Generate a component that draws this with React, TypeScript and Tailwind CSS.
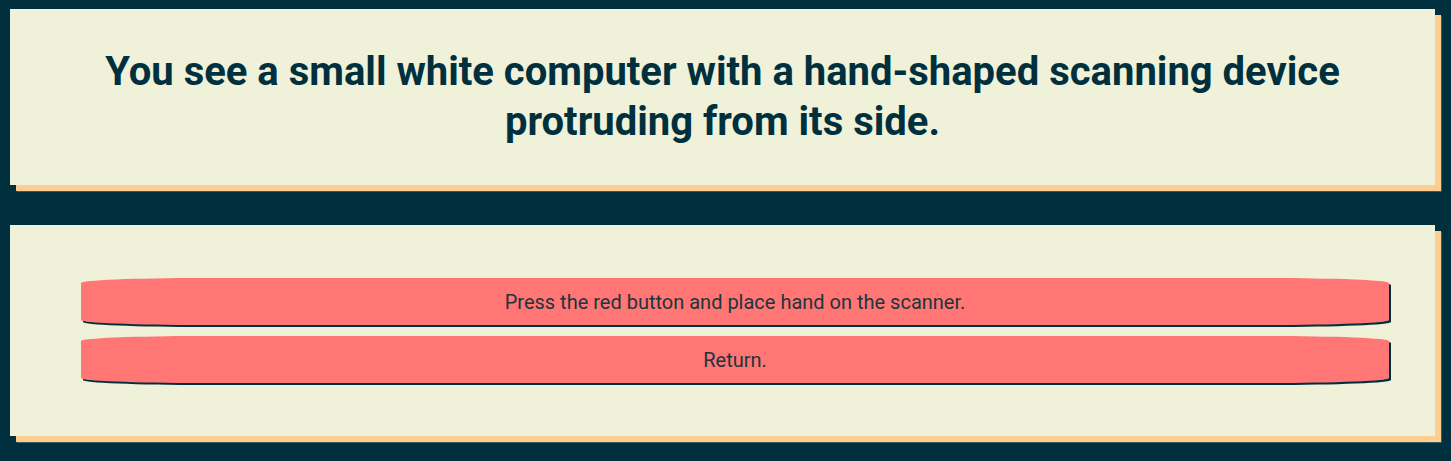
export default function App() {
  const choices = ['Press the red button and place hand on the scanner.', 'Return.']

  return (
    <div className="min-h-[461px] bg-[#00303e] pt-[9px] pl-[10px] pr-[16px] pb-[19px] font-['Roboto',sans-serif]">
      {/* Description */}
      <div className="flex h-[176px] items-center justify-center bg-[#f0f1d9] px-10 shadow-[6px_6px_0_#fecd91,7px_7px_0_#3d5a5f]">
        <h1 className="text-center text-[40px] font-bold leading-[50px] text-[#00303e]">
          You see a small white computer with a hand-shaped scanning device
          <br />
          protruding from its side.
        </h1>
      </div>

      {/* Choices */}
      <div className="mt-[40px] flex h-[211px] flex-col justify-center gap-[11px] bg-[#f0f1d9] pl-[71px] pr-[46px] shadow-[6px_6px_0_#fecd91,7px_7px_0_#3d5a5f]">
        {choices.map(c => (
          <button
            key={c}
            className="h-[47px] w-full rounded-[120px/5px] bg-[#ff7675] text-[20px] text-[#22343b] shadow-[2px_2px_0.5px_#00303e]"
          >
            {c}
          </button>
        ))}
      </div>
    </div>
  )
}
